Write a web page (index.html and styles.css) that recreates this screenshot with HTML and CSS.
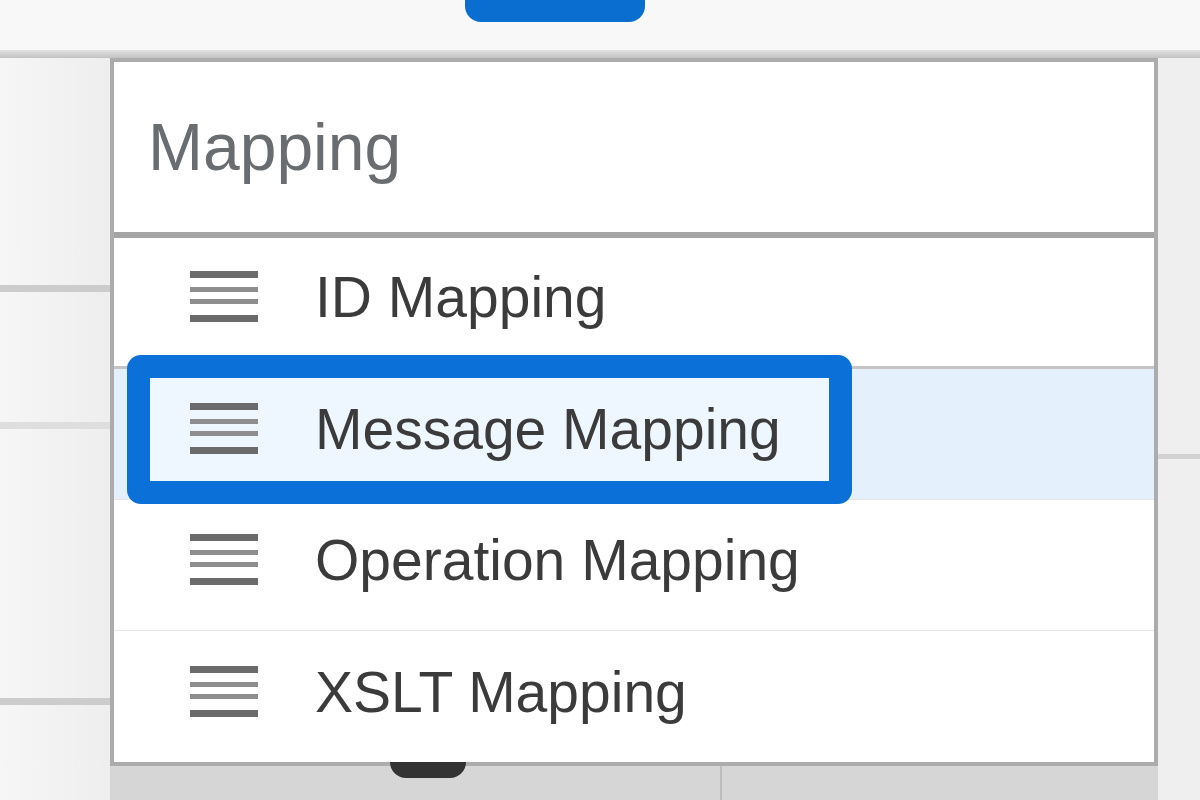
FILE: index.html
```html
<!DOCTYPE html>
<html lang="en">

<head>
  <meta charset="UTF-8">
  <meta name="viewport" content="width=device-width, initial-scale=1.0">
  <title>Mapping</title>
  <link rel="stylesheet" href="styles.css">
</head>

<body>
  <div class="topbar">
    <div class="topbar-tab"></div>
  </div>
  <div class="topbar-shadow"></div>
  <div class="stage">
    <div class="side side-left">
      <div class="side-line side-line-1"></div>
      <div class="side-line side-line-2"></div>
      <div class="side-line side-line-3"></div>
    </div>
    <div class="middle">
      <div class="popover">
        <div class="popover-header">Mapping</div>
        <ul class="mapping-list">
          <li class="mapping-item mapping-item-first">
            <div class="mapping-item-main">
              <svg class="mapping-icon" viewBox="0 0 68 56"><rect y="2" width="68" height="7"/><rect y="18" width="68" height="5" class="mid"/><rect y="30" width="68" height="5" class="mid"/><rect y="46" width="68" height="7"/></svg>
              <span>ID Mapping</span>
            </div>
          </li>
          <li class="mapping-item mapping-item-selected">
            <div class="mapping-item-main mapping-item-focus">
              <svg class="mapping-icon" viewBox="0 0 68 56"><rect y="2" width="68" height="7"/><rect y="18" width="68" height="5" class="mid"/><rect y="30" width="68" height="5" class="mid"/><rect y="46" width="68" height="7"/></svg>
              <span>Message Mapping</span>
            </div>
          </li>
          <li class="mapping-item">
            <div class="mapping-item-main">
              <svg class="mapping-icon" viewBox="0 0 68 56"><rect y="2" width="68" height="7"/><rect y="18" width="68" height="5" class="mid"/><rect y="30" width="68" height="5" class="mid"/><rect y="46" width="68" height="7"/></svg>
              <span>Operation Mapping</span>
            </div>
          </li>
          <li class="mapping-item mapping-item-last">
            <div class="mapping-item-main">
              <svg class="mapping-icon" viewBox="0 0 68 56"><rect y="2" width="68" height="7"/><rect y="18" width="68" height="5" class="mid"/><rect y="30" width="68" height="5" class="mid"/><rect y="46" width="68" height="7"/></svg>
              <span>XSLT Mapping</span>
            </div>
          </li>
        </ul>
      </div>
      <div class="under">
        <div class="under-knob"></div>
        <div class="under-line"></div>
      </div>
    </div>
    <div class="side side-right">
      <div class="side-line side-line-r"></div>
    </div>
  </div>
</body>

</html>
```

FILE: styles.css
```css
*,
*::before,
*::after {
  margin: 0;
  padding: 0;
  box-sizing: border-box;
}
body {
  width: 1200px;
  height: 800px;
  overflow: hidden;
  background: #f0f0f0;
  font-family: "Liberation Sans", Arial, sans-serif;
}
.topbar {
  height: 50px;
  background: #f8f8f8;
}
.topbar-tab {
  margin-left: 465px;
  width: 180px;
  height: 22px;
  background: #0a6ed1;
  border-radius: 0 0 16px 16px;
}
.topbar-shadow {
  height: 8px;
  background: linear-gradient(#e2e2e2, #c2c2c2);
}
.stage {
  display: flex;
  height: 742px;
}
.side {
  display: flex;
  flex-direction: column;
}
.side-left {
  width: 110px;
  background: linear-gradient(90deg, #f6f6f6, #eeeeee);
}
.side-right {
  flex: 1;
  background: #efefef;
}
.side-line {
  height: 7px;
  background: #cccccc;
}
.side-line-1 {
  margin-top: 227px;
}
.side-line-2 {
  margin-top: 130px;
  background: #dedede;
}
.side-line-3 {
  margin-top: 269px;
}
.side-line-r {
  margin-top: 396px;
  height: 5px;
  background: #d2d2d2;
}
.middle {
  width: 1048px;
  display: flex;
  flex-direction: column;
}
.popover {
  background: #fff;
  border: 4px solid #acacac;
}
.popover-header {
  display: flex;
  align-items: center;
  height: 176px;
  padding-left: 34px;
  font-size: 66px;
  color: #6a6d70;
  border-bottom: 6px solid #a4a4a4;
}
.mapping-list {
  list-style: none;
}
.mapping-item {
  display: flex;
  align-items: center;
  height: 131px;
  padding: 0 0 10px 36px;
  border-bottom: 1px solid #e6e6e6;
  font-size: 57px;
  color: #3b3b3b;
}
.mapping-item-first {
  border-bottom: 3px solid #c4c4c4;
}
.mapping-item-last {
  border-bottom: none;
}
.mapping-item-selected {
  background: #e4f1fc;
}
.mapping-item-main {
  display: flex;
  align-items: center;
  height: 103px;
  padding: 0 48px 0 40px;
}
.mapping-item-focus {
  position: relative;
  background: #eef7ff;
}
.mapping-item-focus::after {
  content: "";
  position: absolute;
  inset: -23px;
  border: 23px solid #0b70d8;
  border-radius: 14px;
}
.mapping-icon {
  width: 68px;
  height: 56px;
  margin-right: 57px;
  fill: #6b6b6b;
}
.mapping-icon .mid {
  fill: #8e8e8e;
}
.under {
  flex: 1;
  position: relative;
  background: #d6d6d6;
}
.under-knob {
  position: absolute;
  left: 280px;
  top: -4px;
  width: 76px;
  height: 16px;
  border-radius: 0 0 38px 38px;
  background: #333;
}
.under-line {
  position: absolute;
  left: 610px;
  top: 0;
  width: 2px;
  height: 100%;
  background: #bdbdbd;
}
```
